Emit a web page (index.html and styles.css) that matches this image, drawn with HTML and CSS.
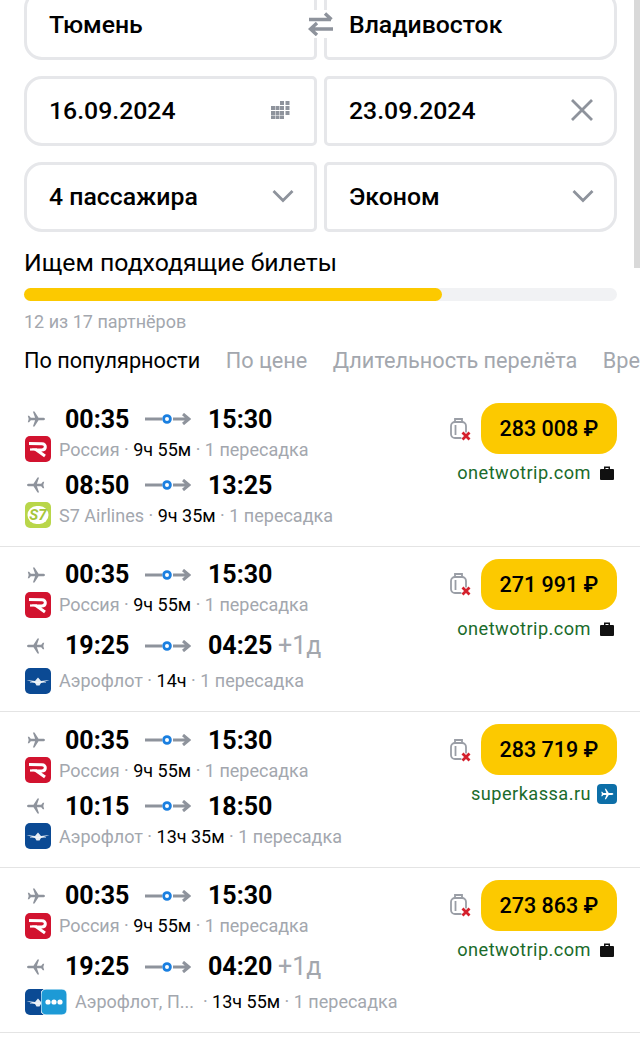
FILE: index.html
```html
<!DOCTYPE html>
<html lang="ru">
<head>
    <meta charset="UTF-8">
    <meta name="viewport" content="width=device-width, initial-scale=1.0">
    <title>Авиабилеты Тюмень — Владивосток</title>
    <link rel="stylesheet" href="styles.css">
</head>
<body>
    <svg class="sprite" width="0" height="0" aria-hidden="true">
        <symbol id="plane" viewBox="0 0 20 20">
            <path d="M19 10c0-.8-1-1.300-2.200-1.300h-4.300L8.500 2.500H6.900l2.200 6.200H4.800L3.100 6.700H1.800l.9 3.300-.9 3.300h1.300l1.700-2h4.300l-2.200 6.200h1.600l4-6.200h4.300C18 11.300 19 10.800 19 10z"/>
        </symbol>
        <symbol id="route" viewBox="0 0 46 12">
            <path d="M0 6h17" stroke="#8e939c" stroke-width="3" fill="none"/>
            <path d="M28 6h16M38 1l6 5-6 5" stroke="#8e939c" stroke-width="3" fill="none"/>
            <circle cx="22" cy="6" r="3.400" fill="#fff" stroke="#1a7fe0" stroke-width="2.800"/>
        </symbol>
        <symbol id="rossiya" viewBox="0 0 26 26">
            <rect width="26" height="26" rx="5" fill="#d2132f"/>
            <path d="M4 7.500l13 .2c4.500 0 4.500 6.300-.5 6.300h-5l8.500 6" fill="none" stroke="#fff" stroke-width="3"/>
            <path d="M5 13.500h7" stroke="#fff" stroke-width="2.200"/>
        </symbol>
        <symbol id="aeroflot" viewBox="0 0 26 26">
            <rect width="26" height="26" rx="5" fill="#0b4a94"/>
            <path d="M1.500 12l8.500 1 3-3.500 3 3.500 8.500-1-8.500 3-1.500 2.500h-3L10 15z" fill="#fff" opacity=".9"/>
            <path d="M5 14.500h16" stroke="#fff" stroke-width=".8" opacity=".6"/>
        </symbol>
        <symbol id="lost-bag" viewBox="0 0 22 24">
            <rect x="1" y="5" width="15" height="16" rx="4" fill="none" stroke="#9a9ea6" stroke-width="1.800"/>
            <path d="M5 5V2h7v3M5.500 8v10" fill="none" stroke="#9a9ea6" stroke-width="1.800"/>
            <path d="M12.500 15.500l7 7M19.500 15.500l-7 7" stroke="#fff" stroke-width="4.500"/>
            <path d="M12.500 15.500l7 7M19.500 15.500l-7 7" stroke="#d4202c" stroke-width="2.800"/>
        </symbol>
        <symbol id="hand-bag" viewBox="0 0 16 16">
            <path d="M5 4V1.500h6V4h3a1 1 0 0 1 1 1v9a1 1 0 0 1-1 1H2a1 1 0 0 1-1-1V5a1 1 0 0 1 1-1z M6.500 4h3V3h-3z" fill="#111" fill-rule="evenodd"/>
        </symbol>
        <symbol id="chevron" viewBox="0 0 22 14">
            <path d="M1.500 2l9.500 9.500L20.500 2" fill="none" stroke="#8e939c" stroke-width="2.800"/>
        </symbol>
    </svg>

    <div class="scrollbar"></div>

    <form class="search">
        <div class="field-row first-row">
            <div class="field field-left">Тюмень</div>
            <div class="field field-right">Владивосток</div>
            <span class="swap">
                <svg width="26" height="24" viewBox="0 0 26 24">
                    <path d="M1 7.500h22M17 1.500l6.500 6" fill="none" stroke="#8e939c" stroke-width="3.400"/>
                    <path d="M25 17H3M9 11l-6.500 6L9 23" fill="none" stroke="#8e939c" stroke-width="3.400"/>
                </svg>
            </span>
        </div>
        <div class="field-row">
            <div class="field field-left">
                16.09.2024
                <svg width="24" height="18" viewBox="0 0 24 18">
                    <path d="M10 0h4v4h-4zM15.500 0h4v4h-4zM1 5h4v4H1zM5.500 5h4v4h-4zM10 5h4v4h-4zM15.500 5h4v4h-4zM1 10h4v4H1zM5.500 10h4v4h-4zM10 10h4v4h-4zM15.500 10h4v4h-4zM1 14.500h4V18H1zM5.500 14.500h4V18h-4zM10 14.500h4V18h-4z" fill="#8e939c"/>
                </svg>
            </div>
            <div class="field field-right">
                23.09.2024
                <svg width="24" height="24" viewBox="0 0 24 24">
                    <path d="M2 2l20 20M22 2L2 22" stroke="#8e939c" stroke-width="2.800"/>
                </svg>
            </div>
        </div>
        <div class="field-row">
            <div class="field field-left">
                4 пассажира
                <svg width="22" height="14"><use href="#chevron"/></svg>
            </div>
            <div class="field field-right">
                Эконом
                <svg width="22" height="14"><use href="#chevron"/></svg>
            </div>
        </div>
    </form>

    <section class="progress">
        <h2>Ищем подходящие билеты</h2>
        <div class="bar"><div class="bar-fill"></div></div>
        <p>12 из 17 партнёров</p>
    </section>

    <nav class="tabs">
        <span class="tab active">По популярности</span>
        <span class="tab">По цене</span>
        <span class="tab">Длительность перелёта</span>
        <span class="tab">Вре</span>
    </nav>

    <article class="flight">
        <div class="segments">
            <div class="times">
                <svg class="plane" width="20" height="20"><use href="#plane"/></svg>
                <b class="time">00:35</b>
                <svg class="route" width="46" height="12"><use href="#route"/></svg>
                <b class="time">15:30</b>
            </div>
            <div class="carrier">
                <svg width="26" height="26"><use href="#rossiya"/></svg>
                <span>Россия · <em>9ч 55м</em> · 1 пересадка</span>
            </div>
            <div class="times back">
                <svg class="plane flip" width="20" height="20"><use href="#plane"/></svg>
                <b class="time">08:50</b>
                <svg class="route" width="46" height="12"><use href="#route"/></svg>
                <b class="time">13:25</b>
            </div>
            <div class="carrier">
                <svg width="26" height="26" viewBox="0 0 26 26">
                    <rect width="26" height="26" rx="5" fill="#b9d64a"/>
                    <rect x="2.500" y="4" width="21" height="18" rx="9" fill="#fff"/>
                    <text class="s7" x="13" y="18">S7</text>
                </svg>
                <span>S7 Airlines · <em>9ч 35м</em> · 1 пересадка</span>
            </div>
        </div>
        <div class="offer">
            <div class="offer-top">
                <svg width="22" height="24"><use href="#lost-bag"/></svg>
                <button type="button" class="price">283 008 ₽</button>
            </div>
            <div class="agency">onetwotrip.com <svg class="bag" width="16" height="16"><use href="#hand-bag"/></svg></div>
        </div>
    </article>

    <article class="flight">
        <div class="segments">
            <div class="times">
                <svg class="plane" width="20" height="20"><use href="#plane"/></svg>
                <b class="time">00:35</b>
                <svg class="route" width="46" height="12"><use href="#route"/></svg>
                <b class="time">15:30</b>
            </div>
            <div class="carrier">
                <svg width="26" height="26"><use href="#rossiya"/></svg>
                <span>Россия · <em>9ч 55м</em> · 1 пересадка</span>
            </div>
            <div class="times back next-day">
                <svg class="plane flip" width="20" height="20"><use href="#plane"/></svg>
                <b class="time">19:25</b>
                <svg class="route" width="46" height="12"><use href="#route"/></svg>
                <b class="time">04:25</b>
                <span class="plus">+1д</span>
            </div>
            <div class="carrier">
                <svg width="26" height="26"><use href="#aeroflot"/></svg>
                <span>Аэрофлот · <em>14ч</em> · 1 пересадка</span>
            </div>
        </div>
        <div class="offer">
            <div class="offer-top">
                <svg width="22" height="24"><use href="#lost-bag"/></svg>
                <button type="button" class="price">271 991 ₽</button>
            </div>
            <div class="agency">onetwotrip.com <svg class="bag" width="16" height="16"><use href="#hand-bag"/></svg></div>
        </div>
    </article>

    <article class="flight">
        <div class="segments">
            <div class="times">
                <svg class="plane" width="20" height="20"><use href="#plane"/></svg>
                <b class="time">00:35</b>
                <svg class="route" width="46" height="12"><use href="#route"/></svg>
                <b class="time">15:30</b>
            </div>
            <div class="carrier">
                <svg width="26" height="26"><use href="#rossiya"/></svg>
                <span>Россия · <em>9ч 55м</em> · 1 пересадка</span>
            </div>
            <div class="times back">
                <svg class="plane flip" width="20" height="20"><use href="#plane"/></svg>
                <b class="time">10:15</b>
                <svg class="route" width="46" height="12"><use href="#route"/></svg>
                <b class="time">18:50</b>
            </div>
            <div class="carrier">
                <svg width="26" height="26"><use href="#aeroflot"/></svg>
                <span>Аэрофлот · <em>13ч 35м</em> · 1 пересадка</span>
            </div>
        </div>
        <div class="offer">
            <div class="offer-top">
                <svg width="22" height="24"><use href="#lost-bag"/></svg>
                <button type="button" class="price">283 719 ₽</button>
            </div>
            <div class="agency">superkassa.ru
                <svg width="20" height="20" viewBox="0 0 20 20">
                    <rect width="20" height="20" rx="4" fill="#0d6fa8"/>
                    <use href="#plane" x="3" y="3" width="14" height="14" fill="#fff"/>
                </svg>
            </div>
        </div>
    </article>

    <article class="flight">
        <div class="segments">
            <div class="times">
                <svg class="plane" width="20" height="20"><use href="#plane"/></svg>
                <b class="time">00:35</b>
                <svg class="route" width="46" height="12"><use href="#route"/></svg>
                <b class="time">15:30</b>
            </div>
            <div class="carrier">
                <svg width="26" height="26"><use href="#rossiya"/></svg>
                <span>Россия · <em>9ч 55м</em> · 1 пересадка</span>
            </div>
            <div class="times back next-day">
                <svg class="plane flip" width="20" height="20"><use href="#plane"/></svg>
                <b class="time">19:25</b>
                <svg class="route" width="46" height="12"><use href="#route"/></svg>
                <b class="time">04:20</b>
                <span class="plus">+1д</span>
            </div>
            <div class="carrier">
                <div class="logos">
                    <svg width="26" height="26"><use href="#aeroflot"/></svg>
                    <svg class="logo-more" width="26" height="26" viewBox="0 0 26 26">
                        <rect width="26" height="26" rx="5" fill="#1d9ad6" stroke="#fff"/>
                        <circle cx="7" cy="13" r="2.600" fill="#fff"/>
                        <circle cx="13" cy="13" r="2.600" fill="#fff"/>
                        <circle cx="19" cy="13" r="2.600" fill="#fff"/>
                    </svg>
                </div>
                <span>Аэрофлот, П... &nbsp;· <em>13ч 55м</em> · 1 пересадка</span>
            </div>
        </div>
        <div class="offer">
            <div class="offer-top">
                <svg width="22" height="24"><use href="#lost-bag"/></svg>
                <button type="button" class="price">273 863 ₽</button>
            </div>
            <div class="agency">onetwotrip.com <svg class="bag" width="16" height="16"><use href="#hand-bag"/></svg></div>
        </div>
    </article>
</body>
</html>
```

FILE: styles.css
```css
html, body {
    height: 100%;
    overflow: hidden;
}
body {
    position: relative;
    margin: 0;
    font-family: Roboto, "Noto Sans", sans-serif;
    background-color: #fff;
    color: #000;
}
.sprite {
    display: block;
}
.scrollbar {
    position: absolute;
    top: 0;
    right: 0;
    width: 6px;
    height: 268px;
    background-color: #d9d9d9;
}
.search {
    padding: 0 23px 0 24px;
}
.field-row {
    position: relative;
    display: flex;
    gap: 7px;
    margin-bottom: 16px;
}
.first-row {
    margin-top: -10px;
}
.field {
    flex: 1;
    height: 70px;
    box-sizing: border-box;
    display: flex;
    align-items: center;
    justify-content: space-between;
    padding: 0 20px 2px 22px;
    border: 3px solid #e6e7ea;
    font-size: 24.8px;
    font-weight: 500;
}
.field-left {
    border-radius: 18px 5px 5px 18px;
}
.field-right {
    border-radius: 5px 18px 18px 5px;
}
.swap {
    position: absolute;
    top: 20px;
    left: 284px;
    padding: 2px 0;
    background-color: #fff;
    line-height: 0;
}
.progress {
    padding: 0 23px 0 24px;
    margin-top: -1px;
}
.progress h2 {
    margin: 0;
    font-size: 24.8px;
    font-weight: 400;
    line-height: 32px;
}
.bar {
    height: 13px;
    margin-top: 9px;
    border-radius: 7px;
    background-color: #f1f2f4;
}
.bar-fill {
    width: 418px;
    height: 100%;
    border-radius: 7px;
    background-color: #fcc900;
}
.progress p {
    margin: 9px 0 0;
    font-size: 18px;
    line-height: 24px;
    color: #a3a7ae;
}
.tabs {
    display: flex;
    gap: 25.5px;
    margin-top: 12px;
    margin-bottom: 15px;
    padding-left: 24px;
    font-size: 21.7px;
    line-height: 30px;
    white-space: nowrap;
    color: #a3a7ae;
}
.tab.active {
    color: #000;
}
.flight {
    display: flex;
    justify-content: space-between;
    padding: 13px 23px 15.5px 24px;
    border-bottom: 1px solid #e4e4e4;
}
.times {
    display: flex;
    align-items: center;
    height: 30px;
}
.times.back {
    margin-top: 6px;
}
.times.next-day {
    height: 40px;
}
.plane {
    margin-left: 2px;
    fill: #8e939c;
}
.plane.flip {
    transform: scaleX(-1);
}
.time {
    width: 64px;
    margin-left: 19px;
    font-size: 25px;
    font-weight: 700;
}
.route {
    margin: 0 17px 0 16px;
}
.route + .time {
    margin-left: 0;
}
.plus {
    margin-left: 6px;
    font-size: 25px;
    color: #a3a7ae;
}
.carrier {
    display: flex;
    align-items: center;
    gap: 8px;
    height: 30px;
    padding-left: 1px;
    font-size: 18px;
    color: #a3a7ae;
    white-space: nowrap;
}
.carrier em {
    font-style: normal;
    color: #000;
}
.s7 {
    font-size: 15px;
    font-weight: 700;
    font-style: italic;
    fill: #a5c63a;
    text-anchor: middle;
}
.logos {
    display: flex;
}
.logo-more {
    margin-left: -10px;
}
.offer {
    display: flex;
    flex-direction: column;
    align-items: flex-end;
}
.offer-top {
    display: flex;
    align-items: center;
    gap: 9px;
    margin-top: -1px;
}
.price {
    width: 136px;
    height: 51px;
    padding: 0;
    border: none;
    border-radius: 18px;
    background-color: #fcc900;
    color: #000;
    font-family: inherit;
    font-size: 21.5px;
    font-weight: 500;
}
.agency {
    display: flex;
    align-items: center;
    gap: 6px;
    margin-top: 8px;
    font-size: 18.2px;
    line-height: 22px;
    letter-spacing: 0.45px;
    color: #1b6b2b;
}
.bag {
    margin: 0 2px;
}
```
